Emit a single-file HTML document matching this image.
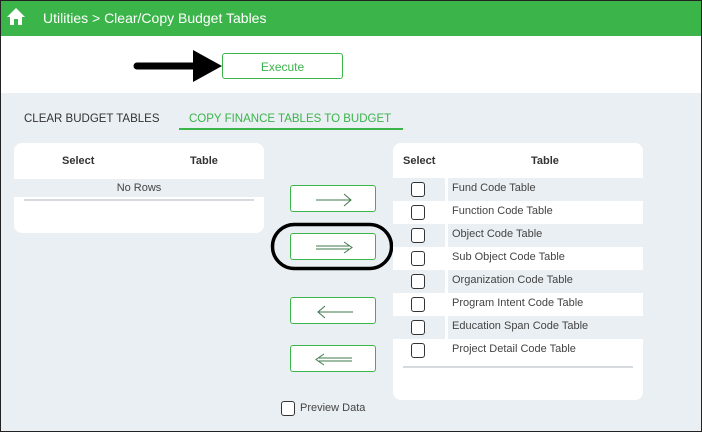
<!DOCTYPE html>
<html><head><style>
*{box-sizing:border-box;margin:0;padding:0}
body{width:702px;height:432px;overflow:hidden;font-family:"Liberation Sans",sans-serif;position:relative;background:#e9eff3}
.frame{position:absolute;left:0;top:0;width:702px;height:432px;border:1px solid #222;pointer-events:none;z-index:10}
.hdr{position:absolute;left:0;top:0;width:702px;height:36px;background:#3bb44a;color:#fff;font-size:14px}
.white{position:absolute;left:0;top:36px;width:702px;height:57px;background:#fff}
.btn{position:absolute;border:1px solid #3bb44a;border-radius:3px;background:#fff}
.t{position:absolute;font-size:12px;color:#333;white-space:nowrap}
.panel{position:absolute;background:#fff;border-radius:8px;overflow:hidden}
.row{position:absolute;left:0;width:250px;height:23px}
.cb{position:absolute;width:14px;height:15px;border:1px solid #333;border-radius:3px;background:#fff}
.lbl{position:absolute;left:59px;font-size:11px;color:#444;top:4px}
</style></head><body>
<div class="frame"></div>
<div class="hdr">
<svg style="position:absolute;left:6px;top:7px" width="20" height="19" viewBox="0 0 20 19"><path d="M10 1 L1 10 L4 10 L4 18 L8 18 L8 12 L12 12 L12 18 L16 18 L16 10 L19 10 Z" fill="#fff"/></svg>
<span style="position:absolute;left:43px;top:10px">Utilities &gt; Clear/Copy Budget Tables</span>
</div>
<div class="white"></div>
<svg style="position:absolute;left:130px;top:48px" width="95" height="36"><path d="M7 18 L66 18" stroke="#000" stroke-width="7" stroke-linecap="round"/><path d="M63 2 L92 18 L63 34 Z" fill="#000"/></svg>
<div class="btn" style="left:222px;top:53px;width:121px;height:26px;text-align:center;line-height:26px;font-size:12px;color:#3bb44a">Execute</div>
<div class="t" style="left:24px;top:113px;font-size:11.5px;color:#333">CLEAR BUDGET TABLES</div>
<div class="t" style="left:189px;top:113px;font-size:11.5px;color:#3bb44a">COPY FINANCE TABLES TO BUDGET</div>
<div style="position:absolute;left:179px;top:128px;width:224px;height:2px;background:#3bb44a"></div>

<div class="panel" style="left:14px;top:143px;width:250px;height:90px">
<div class="t" style="left:48px;top:12px;font-weight:bold;font-size:11px">Select</div>
<div class="t" style="left:176px;top:12px;font-weight:bold;font-size:11px">Table</div>
<div style="position:absolute;left:0;top:36px;width:250px;height:18px;background:#e9eff3;text-align:center;font-size:11px;color:#444;line-height:19px">No Rows</div>
<div style="position:absolute;left:10px;top:56px;width:230px;height:2px;background:#d6d9de"></div>
</div>

<div class="btn" style="left:290px;top:185px;width:86px;height:27px"><svg width="86" height="27"><path d="M25 14 L60 14 M53 8 L60 14 L53 20" stroke="#3f7a4a" fill="none"/></svg></div>
<div class="btn" style="left:290px;top:233px;width:86px;height:27px"><svg width="86" height="27"><path d="M25 12 L58 12 M25 15 L58 15 M53 8 L61 13.5 L53 19" stroke="#3f7a4a" fill="none"/></svg></div>
<div class="btn" style="left:290px;top:297px;width:86px;height:27px"><svg width="86" height="27"><path d="M27 14 L62 14 M34 8 L27 14 L34 20" stroke="#3f7a4a" fill="none"/></svg></div>
<div class="btn" style="left:290px;top:345px;width:86px;height:27px"><svg width="86" height="27"><path d="M28 12 L61 12 M28 15 L61 15 M33 8 L25 13.5 L33 19" stroke="#3f7a4a" fill="none"/></svg></div>
<svg style="position:absolute;left:270px;top:222px" width="125" height="50"><rect x="2.5" y="2.5" width="119" height="44" rx="22" fill="none" stroke="#000" stroke-width="3.5"/></svg>

<div class="panel" style="left:393px;top:143px;width:250px;height:257px">
<div class="t" style="left:10px;top:12px;font-weight:bold;font-size:11px">Select</div>
<div class="t" style="left:138px;top:12px;font-weight:bold;font-size:11px">Table</div>
<div class="row" style="top:35px;background:#e9eff3"><div style="position:absolute;left:52px;width:3px;height:23px;background:#fff"></div><div class="cb" style="left:18px;top:4px"></div><div class="lbl">Fund Code Table</div></div>
<div class="row" style="top:58px"><div class="cb" style="left:18px;top:4px"></div><div class="lbl">Function Code Table</div></div>
<div class="row" style="top:81px;background:#e9eff3"><div style="position:absolute;left:52px;width:3px;height:23px;background:#fff"></div><div class="cb" style="left:18px;top:4px"></div><div class="lbl">Object Code Table</div></div>
<div class="row" style="top:104px"><div class="cb" style="left:18px;top:4px"></div><div class="lbl">Sub Object Code Table</div></div>
<div class="row" style="top:127px;background:#e9eff3"><div style="position:absolute;left:52px;width:3px;height:23px;background:#fff"></div><div class="cb" style="left:18px;top:4px"></div><div class="lbl">Organization Code Table</div></div>
<div class="row" style="top:150px"><div class="cb" style="left:18px;top:4px"></div><div class="lbl">Program Intent Code Table</div></div>
<div class="row" style="top:173px;background:#e9eff3"><div style="position:absolute;left:52px;width:3px;height:23px;background:#fff"></div><div class="cb" style="left:18px;top:4px"></div><div class="lbl">Education Span Code Table</div></div>
<div class="row" style="top:196px"><div class="cb" style="left:18px;top:4px"></div><div class="lbl">Project Detail Code Table</div></div>
<div style="position:absolute;left:10px;top:223px;width:230px;height:2px;background:#d6d9de"></div>
</div>

<div class="cb" style="left:281px;top:401px"></div>
<div class="t" style="left:300px;top:402px;font-size:11px;color:#444">Preview Data</div>
</body></html>
